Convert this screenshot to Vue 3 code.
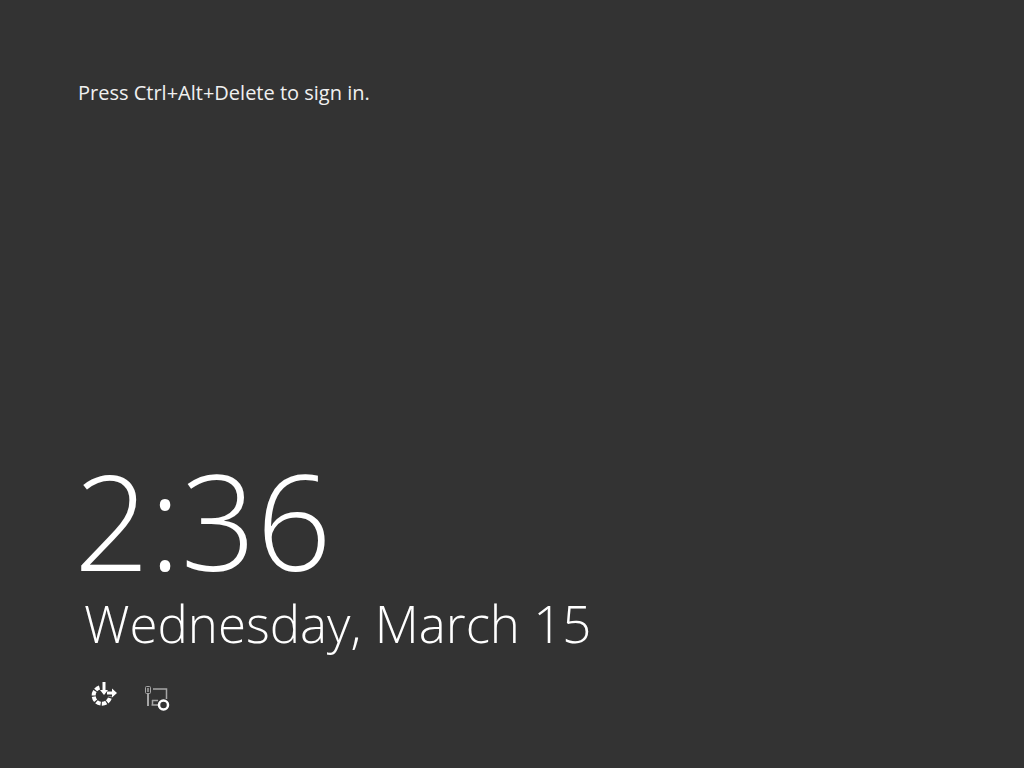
<script setup>
const time = '2:36'
const date = 'Wednesday, March 15'
</script>

<template>
  <main class="lock">
    <p class="hint">Press Ctrl+Alt+Delete to sign in.</p>
    <section class="bottom">
      <time class="clock">{{ time }}</time>
      <time class="date">{{ date }}</time>
      <div class="tray">
        <button type="button" class="tool" aria-label="Ease of access">
          <svg width="28" height="32" viewBox="0 0 28 32" fill="none" stroke="#fff">
            <path d="M9.500 7.500A8.300 8.300 0 1 0 20.200 16.500" stroke-width="4" stroke-dasharray="4.600 1.200" />
            <path d="M14 2v10" stroke-width="3" />
            <path d="M10 10h8l-4 5z" fill="#fff" stroke="none" />
            <path d="M17 13h7" stroke-width="3" />
            <path d="M22 8.500v9l5-4.500z" fill="#fff" stroke="none" />
          </svg>
        </button>
        <button type="button" class="tool" aria-label="Network">
          <svg width="28" height="32" viewBox="0 0 28 32" fill="none" stroke="#a6a6a6">
            <rect x="1.500" y="6.500" width="5" height="7" rx="1" />
            <path d="M4 8v4" stroke-width="1.500" />
            <path d="M4 13v13" stroke-width="2" />
            <path d="M9 9h13.500v10" stroke-width="1.500" />
            <path d="M14 20.500h-6M7.500 25h6.500M8.500 20v5" stroke-width="1.500" />
            <circle cx="19.500" cy="25" r="4.500" fill="#333" stroke="#fff" stroke-width="2.500" />
          </svg>
        </button>
      </div>
    </section>
  </main>
</template>

<style>
body {
  background: #333;
}
</style>

<style scoped>
.lock {
  box-sizing: border-box;
  min-height: 100vh;
  padding: 79px 74px 56px;
  display: flex;
  flex-direction: column;
  justify-content: space-between;
  background: #333;
  color: #fff;
  font-family: "Open Sans", "Noto Sans", sans-serif;
  font-weight: 300;
}
.hint {
  margin: 0;
  padding-left: 4px;
  color: #f0f0f0;
  font-size: 20px;
  font-weight: 400;
  line-height: 28px;
}
.bottom {
  display: flex;
  flex-direction: column;
}
.clock {
  font-size: 132px;
  line-height: 136px;
}
.date {
  padding-left: 10px;
  font-size: 51px;
  line-height: 70px;
}
.tray {
  display: flex;
  gap: 26px;
  padding-left: 16px;
  margin-top: 22px;
}
.tool {
  display: flex;
  padding: 0;
  border: 0;
  background: none;
}
</style>
